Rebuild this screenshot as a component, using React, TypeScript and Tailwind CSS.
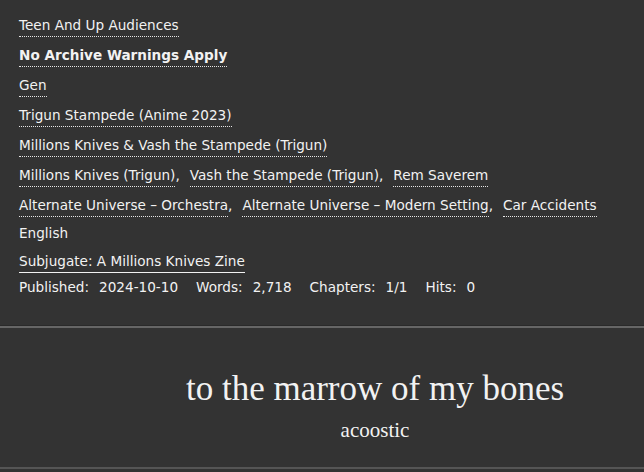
import React from 'react';

const Tag: React.FC<{ children: React.ReactNode; bold?: boolean }> = ({ children, bold }) => (
  <span className={`inline-block border-b border-dotted border-[#e6e6e6] pb-[1px] leading-[19px] ${bold ? 'font-bold' : ''}`}>
    {children}
  </span>
);

const TagRow: React.FC<{ items: string[] }> = ({ items }) => (
  <div className="flex h-[30px] items-start gap-[10px] pt-[15px]">
    {items.map((item, i) => (
      <span key={item} className="whitespace-nowrap">
        <Tag>{item}</Tag>
        {i < items.length - 1 && ','}
      </span>
    ))}
  </div>
);

export default function App() {
  return (
    <div className="h-[472px] w-[644px] overflow-hidden bg-[#333333] text-[#f2f2f2]">
      <div className="h-[325px] pl-[19px] text-[13.6px] font-['DejaVu_Sans',sans-serif]">
        <TagRow items={['Teen And Up Audiences']} />
        <div className="flex h-[30px] items-start pt-[16px]">
          <Tag bold>No Archive Warnings Apply</Tag>
        </div>
        <TagRow items={['Gen']} />
        <TagRow items={['Trigun Stampede (Anime 2023)']} />
        <TagRow items={['Millions Knives & Vash the Stampede (Trigun)']} />
        <TagRow items={['Millions Knives (Trigun)', 'Vash the Stampede (Trigun)', 'Rem Saverem']} />
        <TagRow items={['Alternate Universe – Orchestra', 'Alternate Universe – Modern Setting', 'Car Accidents']} />
        <div className="pt-[14px] leading-[19px]">English</div>
        <div className="pt-[8px]">
          <span className="inline-block border-b border-[#f2f2f2] pb-[1px] leading-[19px]">Subjugate: A Millions Knives Zine</span>
        </div>
        <div className="flex gap-[18px] pt-[5px] leading-[19px]">
          <span className="flex gap-[10px]"><span>Published:</span><span>2024-10-10</span></span>
          <span className="flex gap-[10px]"><span>Words:</span><span>2,718</span></span>
          <span className="flex gap-[10px]"><span>Chapters:</span><span>1/1</span></span>
          <span className="flex gap-[10px]"><span>Hits:</span><span>0</span></span>
        </div>
      </div>
      <div className="h-[1px] bg-[#2a2a2a]" />
      <div className="h-[2px] bg-[#666666]" />
      <div className="h-[141px] border-b-2 border-[#555555] pl-[106px] text-center font-['Liberation_Serif',serif]">
        <h2 className="pt-[40px] text-[35px] leading-[42px]">to the marrow of my bones</h2>
        <div className="pt-[8px] text-[21px] leading-[24px]">acoostic</div>
      </div>
    </div>
  );
}
